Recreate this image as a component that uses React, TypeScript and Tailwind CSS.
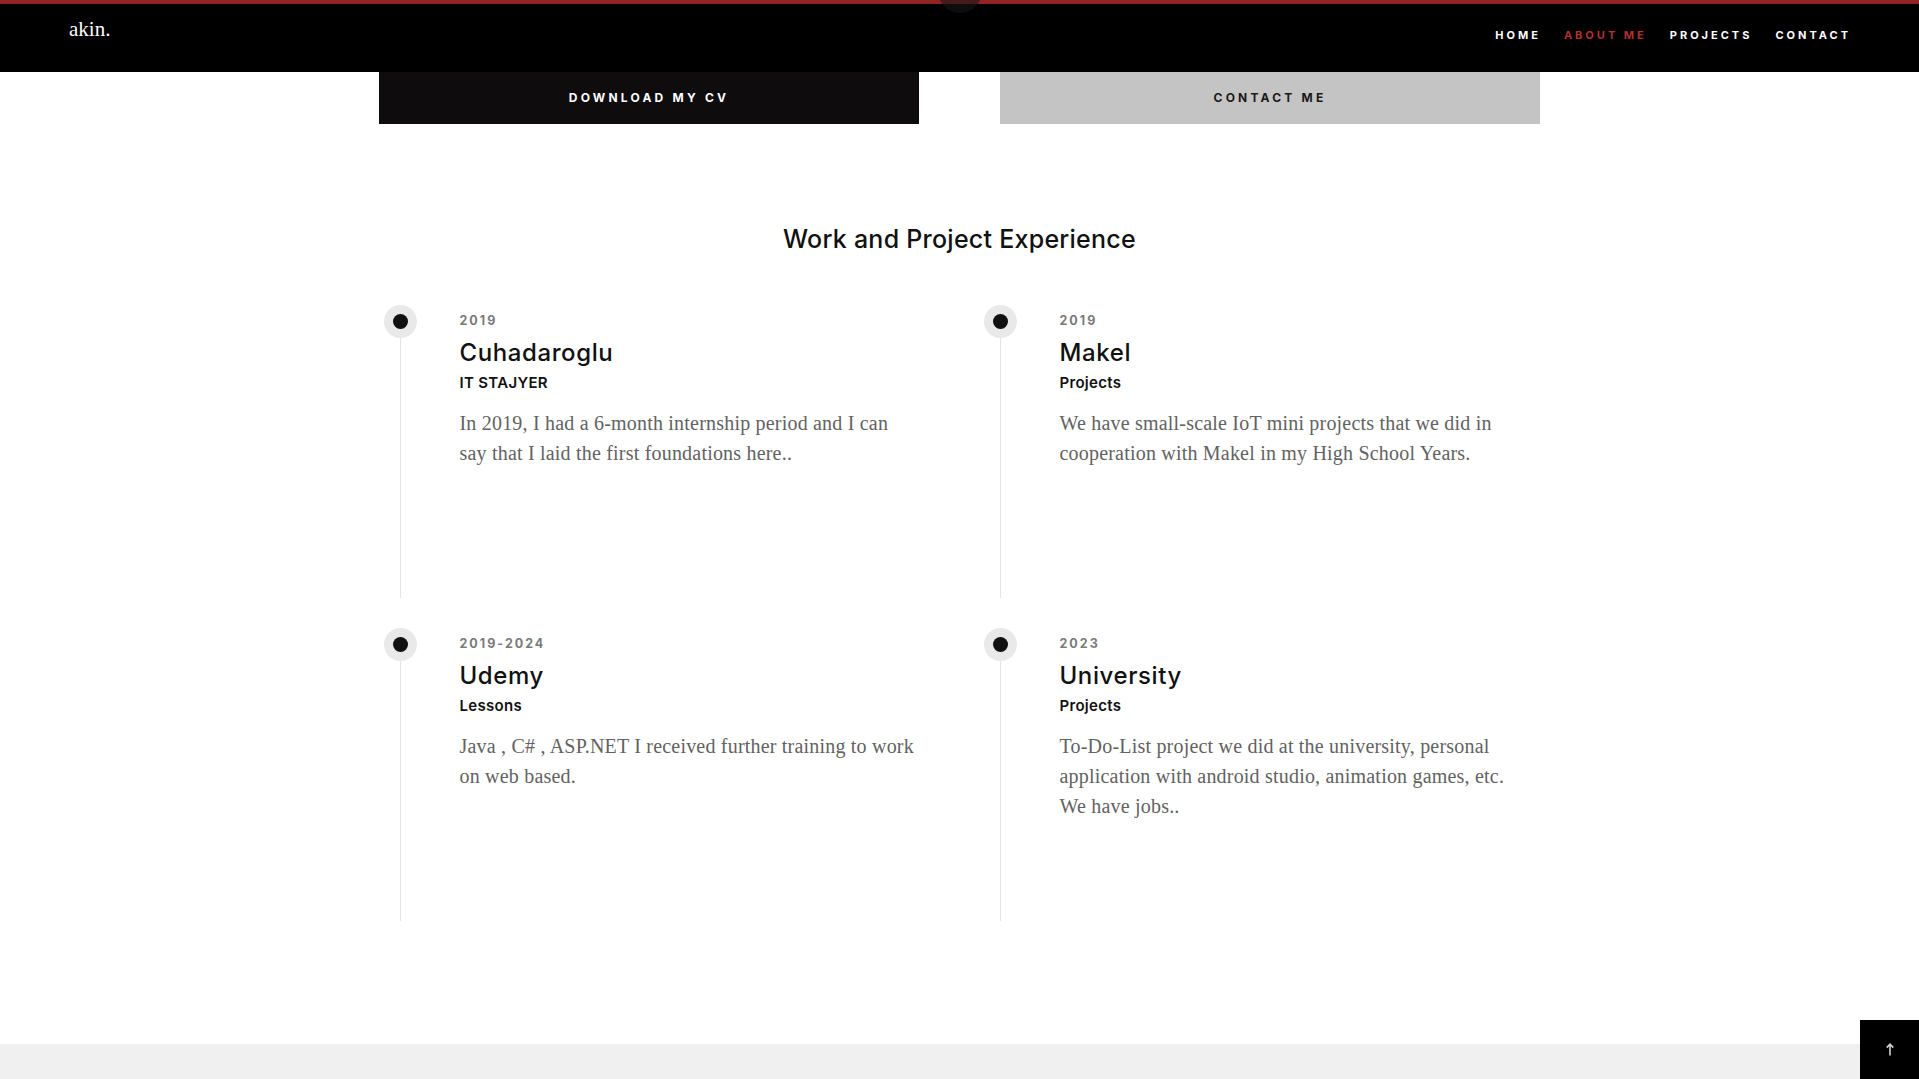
import React from "react";

const sans = "font-['Inter','Liberation_Sans',sans-serif]";

const items = [
  {
    year: "2019",
    title: "Cuhadaroglu",
    role: "IT STAJYER",
    lines: [
      "In 2019, I had a 6-month internship period and I can",
      "say that I laid the first foundations here..",
    ],
  },
  {
    year: "2019",
    title: "Makel",
    role: "Projects",
    lines: [
      "We have small-scale IoT mini projects that we did in",
      "cooperation with Makel in my High School Years.",
    ],
  },
  {
    year: "2019-2024",
    title: "Udemy",
    role: "Lessons",
    lines: [
      "Java , C# , ASP.NET I received further training to work",
      "on web based.",
    ],
  },
  {
    year: "2023",
    title: "University",
    role: "Projects",
    lines: [
      "To-Do-List project we did at the university, personal",
      "application with android studio, animation games, etc.",
      "We have jobs..",
    ],
  },
];

const TimelineItem = ({ item }: { item: (typeof items)[number] }) => {
  return (
    <div className="relative h-[293px] pl-[100px]">
      <div className="absolute left-[24px] top-0 flex h-[33px] w-[33px] items-center justify-center rounded-full bg-[#e9e9e9]">
        <div className="h-[15px] w-[15px] rounded-full bg-[#111]" />
      </div>
      <div className="absolute left-[40px] top-[33px] bottom-0 w-px bg-[#e4e4e4]" />
      <div className={`pt-[8px] text-[12.5px] leading-[16px] font-bold tracking-[2px] text-[#7a7a7a] ${sans}`}>
        {item.year}
      </div>
      <h3 className={`mt-[9px] text-[24px] leading-[30px] font-medium tracking-[0.6px] text-[#111] ${sans}`}>
        {item.title}
      </h3>
      <div className={`mt-[5px] text-[15px] leading-[20px] font-semibold tracking-[0.3px] text-[#111] ${sans}`}>
        {item.role}
      </div>
      <p className="mt-[15px] whitespace-nowrap text-[20px] leading-[30px] tracking-[0.2px] text-[#626262] font-['Liberation_Serif',serif]">
        {item.lines.map((l, i) => (
          <React.Fragment key={i}>
            {l}
            {i < item.lines.length - 1 && <br />}
          </React.Fragment>
        ))}
      </p>
    </div>
  );
};

export default function App() {
  return (
    <div className="min-h-screen bg-white">
      <header className="flex h-[72px] items-start justify-between border-t-4 border-[#8f2426] bg-black pl-[69px] pr-[68px]">
        <div className="pt-[15px] text-[21px] leading-[21px] text-white font-['Liberation_Serif',serif]">
          akin.
        </div>
        <nav className={`flex gap-[23px] pt-[26px] text-[11px] leading-[11px] font-bold tracking-[3px] ${sans}`}>
          <a className="text-white">HOME</a>
          <a className="text-[#b3302e]">ABOUT ME</a>
          <a className="text-white">PROJECTS</a>
          <a className="text-white">CONTACT</a>
        </nav>
      </header>
      <div className="pointer-events-none absolute left-[938px] top-[-31px] h-[44px] w-[44px] rounded-full bg-[#161616]/60" />

      <div className="mx-auto flex w-[1161px] justify-between">
        <button className={`flex h-[52px] w-[540px] items-center justify-center bg-[#0e0c0c] text-[12px] font-bold tracking-[3.2px] text-white ${sans}`}>
          DOWNLOAD MY CV
        </button>
        <button className={`flex h-[52px] w-[540px] items-center justify-center bg-[#c4c4c4] text-[12px] font-bold tracking-[3.2px] text-[#1a1a1a] ${sans}`}>
          CONTACT ME
        </button>
      </div>

      <h2 className={`mt-[99px] text-center text-[25px] leading-[32px] font-medium tracking-[0.25px] text-[#111] ${sans}`}>
        Work and Project Experience
      </h2>

      <div className="mx-auto mt-[50px] grid w-[1200px] grid-cols-2 gap-y-[30px]">
        {items.map((item, i) => (
          <TimelineItem key={i} item={item} />
        ))}
      </div>

      <footer className="mt-[123px] h-[120px] bg-[#f0f0f0]" />

      <a className="fixed bottom-0 right-0 flex h-[59px] w-[59px] items-center justify-center bg-black">
        <svg width="8" height="13" viewBox="0 0 8 13" fill="none">
          <path d="M4 12.5V1.5" stroke="#d4d4d4" strokeWidth="1.6" />
          <path d="M0.8 4.6L4 1.2L7.2 4.6" stroke="#d4d4d4" strokeWidth="1.6" />
        </svg>
      </a>
    </div>
  );
}
